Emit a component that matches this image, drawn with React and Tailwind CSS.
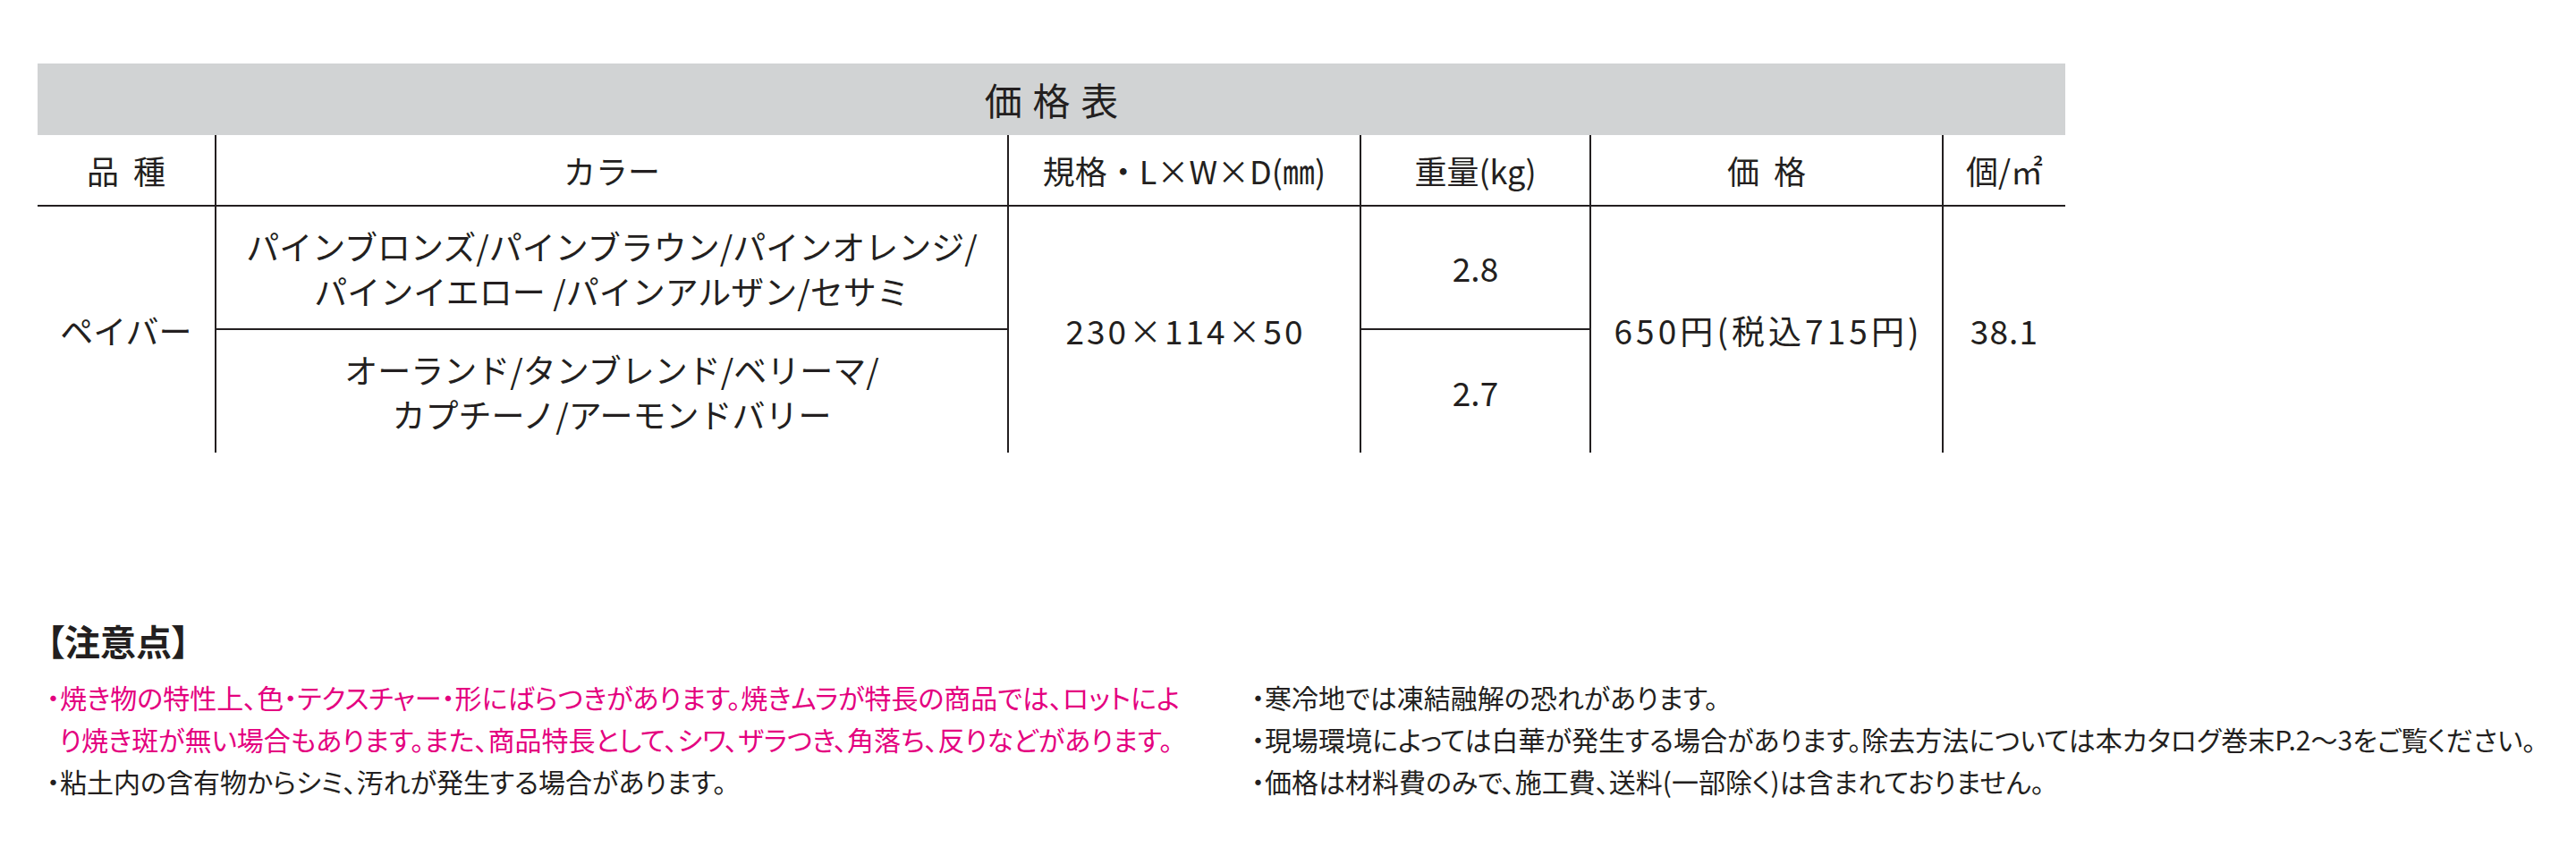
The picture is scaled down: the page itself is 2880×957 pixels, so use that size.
import React from "react";

const ink = "text-[#231f20]";

const Cell = ({ className = "", children }) => (
  <div className={`flex items-center justify-center text-center ${className}`}>{children}</div>
);

const PriceTable = () => {
  return (
    <div className={`grid w-[2267px] grid-cols-[198px_886px_394px_257px_394px_138px] grid-rows-[80px_80px_138px_137px] ${ink} text-[37px] leading-[50px]`}>
      {/* title bar */}
      <Cell className="col-span-6 bg-[#d1d3d4] text-[42px] tracking-[0.28em] pl-[0.28em]">価格表</Cell>

      {/* column heads */}
      <Cell className="border-b-2 border-[#231f20] tracking-[0.45em] pl-[0.45em] text-[36px]">品種</Cell>
      <Cell className="border-b-2 border-l-2 border-[#231f20] text-[36px]">カラー</Cell>
      <Cell className="border-b-2 border-l-2 border-[#231f20] text-[36px]">規格・L×W×D(㎜)</Cell>
      <Cell className="border-b-2 border-l-2 border-[#231f20] text-[36px]">重量(kg)</Cell>
      <Cell className="border-b-2 border-l-2 border-[#231f20] tracking-[0.45em] pl-[0.45em] text-[36px]">価格</Cell>
      <Cell className="border-b-2 border-l-2 border-[#231f20] text-[36px]">個/㎡</Cell>

      {/* body */}
      <Cell className="col-start-1 row-start-3 row-span-2">ペイバー</Cell>
      <Cell className="col-start-2 row-start-3 border-l-2 border-b-2 border-[#231f20] pt-[2px]">
        <div>
          パインブロンズ/パインブラウン/パインオレンジ/
          <br />
          パインイエロー /パインアルザン/セサミ
        </div>
      </Cell>
      <Cell className="col-start-2 row-start-4 border-l-2 border-[#231f20]">
        <div>
          オーランド/タンブレンド/ベリーマ/
          <br />
          カプチーノ/アーモンドバリー
        </div>
      </Cell>
      <Cell className="col-start-3 row-start-3 row-span-2 border-l-2 border-[#231f20] tabular-nums tracking-[0.08em] pl-[0.08em]">230×114×50</Cell>
      <Cell className="col-start-4 row-start-3 border-l-2 border-b-2 border-[#231f20]">2.8</Cell>
      <Cell className="col-start-4 row-start-4 border-l-2 border-[#231f20]">2.7</Cell>
      <Cell className="col-start-5 row-start-3 row-span-2 border-l-2 border-[#231f20] tabular-nums tracking-[0.11em] pl-[0.11em]">650円(税込715円)</Cell>
      <Cell className="col-start-6 row-start-3 row-span-2 border-l-2 border-[#231f20] tracking-[0.03em]">38.1</Cell>
    </div>
  );
};

const Notes = () => {
  return (
    <div className={`mt-[190px] pl-[10px] ${ink} [font-feature-settings:'palt']`}>
      <h3 className="text-[40px] font-bold leading-[40px]">【注意点】</h3>
      <div className="mt-[20px] grid grid-cols-[1347px_1fr] text-[30px] leading-[47px] whitespace-nowrap">
        <div>
          <div className="text-[#e4007f]">
            <p>・焼き物の特性上、色・テクスチャー・形にばらつきがあります。焼きムラが特長の商品では、ロットによ</p>
            <p className="pl-[14px]">り焼き斑が無い場合もあります。また、商品特長として、シワ、ザラつき、角落ち、反りなどがあります。</p>
          </div>
          <p>・粘土内の含有物からシミ、汚れが発生する場合があります。</p>
        </div>
        <div>
          <p>・寒冷地では凍結融解の恐れがあります。</p>
          <p>・現場環境によっては白華が発生する場合があります。除去方法については本カタログ巻末P.2〜3をご覧ください。</p>
          <p>・価格は材料費のみで、施工費、送料(一部除く)は含まれておりません。</p>
        </div>
      </div>
    </div>
  );
};

export default function App() {
  return (
    <div className="w-[2880px] h-[957px] bg-white pt-[71px] pl-[42px] font-['Noto_Sans_CJK_JP','Noto_Sans',sans-serif]">
      <PriceTable />
      <Notes />
    </div>
  );
}
